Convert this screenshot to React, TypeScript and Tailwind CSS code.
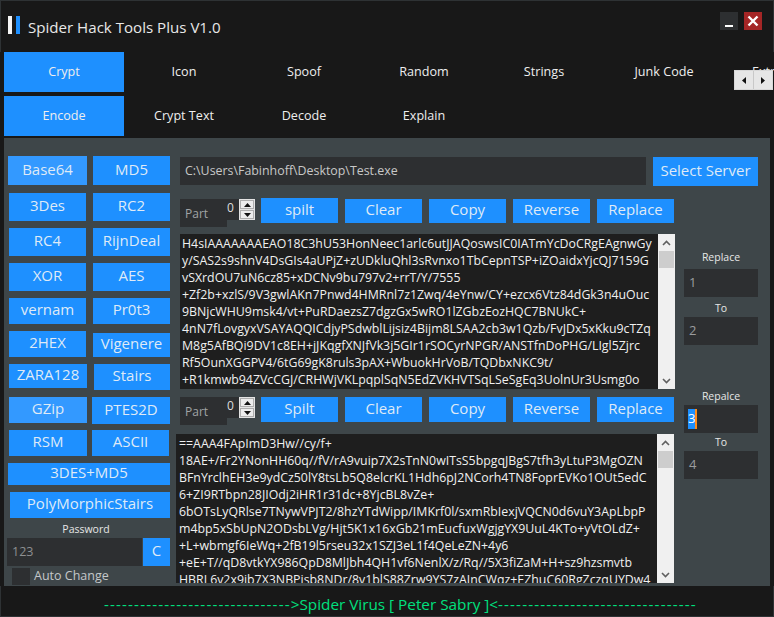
import React from "react";

const font = { fontFamily: '"Open Sans","Noto Sans",sans-serif' };

const text1 = [
  "H4sIAAAAAAAEAO18C3hU53HonNeec1arlc6utJJAQoswsIC0IATmYcDoCRgEAgnwGy",
  "y/SAS2s9shnV4DsGIs4aUPjZ+zUDkluQhl3sRvnxo1TbCepnTSP+iZOaidxYjcQJ7159G",
  "vSXrdOU7uN6cz85+xDCNv9bu797v2+rrT/Y/7555",
  "+Zf2b+xzlS/9V3gwlAKn7Pnwd4HMRnl7z1Zwq/4eYnw/CY+ezcx6Vtz84dGk3n4uOuc",
  "9BNjcWHU9msk4/vt+PuRDaezsZ7dgzGx5wRO1lZGbzEozHQC7BNUkC+",
  "4nN7fLovgyxVSAYAQQICdjyPSdwblLijsiz4Bijm8LSAA2cb3w1Qzb/FvJDx5xKku9cTZq",
  "M8g5AfBQi9DV1c8EH+jJKqgfXNJfVk3j5GIr1rSOCyrNPGR/ANSTfnDoPHG/LIgl5Zjrc",
  "Rf5OunXGGPV4/6tG69gK8ruls3pAX+WbuokHrVoB/TQDbxNKC9t/",
  "+R1kmwb94ZVcCGJ/CRHWjVKLpqplSqN5EdZVKHVTSqLSeSgEq3UolnUr3Usmg0o",
];

const text2 = [
  "==AAA4FApImD3Hw//cy/f+",
  "18AE+/Fr2YNonHH60q//fV/rA9vuip7X2sTnN0wITsS5bpgqJBgS7tfh3yLtuP3MgOZN",
  "BFnYrclhEH3e9ydCz50lY8tsLb5Q8elcrKL1Hdh6pJ2NCorh4TN8FoprEVKo1OUt5edC",
  "6+ZI9RTbpn28JIOdj2iHR1r31dc+8YjcBL8vZe+",
  "6bOTsLyQRlse7TNywVPJT2/8hzYTdWipp/IMKrf0l/sxmRbIexjVQCN0d6vuY3ApLbpP",
  "m4bp5xSbUpN2ODsbLVg/Hjt5K1x16xGb21mEucfuxWgjgYX9UuL4KTo+yVtOLdZ+",
  "+L+wbmgf6IeWq+2fB19l5rseu32x1SZJ3eL1f4QeLeZN+4y6",
  "+eE+T//qD8vtkYX986QpD8MlJbh4QH1vf6NenlX/z/Rq//5X3fiZaM+H+sz9hzsmvtb",
  "HBRL6v2x9ib7X3NBPisb8NDr/8v1blS88Zrw9YS7zAJnCWqz+EZhuC60RgZczqUYDw4",
];

function Btn({ className = "", light, children }: { className?: string; light?: boolean; children: React.ReactNode }) {
  return (
    <div className={"flex shrink-0 items-center justify-center pb-[3px] text-[15px] leading-none text-[#dfeaf7] whitespace-nowrap " + (light ? "bg-[#3399ff] " : "bg-[#1e90ff] ") + className}>
      {children}
    </div>
  );
}

function Tab({ active, className = "", children }: { active?: boolean; className?: string; children: React.ReactNode }) {
  return (
    <div className={"flex h-[40px] w-[120px] shrink-0 items-center justify-center text-[12.6px] text-[#eeeeee] whitespace-nowrap " + (active ? "bg-[#1e90ff] " : "") + className}>
      {children}
    </div>
  );
}

function Lines({ lines }: { lines: string[] }) {
  return (
    <div className="min-w-0 flex-1 overflow-hidden pl-[2px] text-[12.35px] leading-[17px] text-[#f0f0f0]">
      {lines.map((l, i) => (
        <div key={i} className="h-[17px] whitespace-nowrap">
          {l}
        </div>
      ))}
    </div>
  );
}

function ScrollBar() {
  return (
    <div className="flex h-full w-[17px] shrink-0 flex-col items-center justify-between bg-[#f0f0f0]">
      <div className="flex w-full flex-col items-center">
        <div className="flex h-[17px] w-full items-center justify-center">
          <svg width="9" height="6" viewBox="0 0 9 6">
            <path d="M1 5 L4.5 1.5 L8 5" fill="none" stroke="#606060" strokeWidth="1.6" />
          </svg>
        </div>
        <div className="h-[17px] w-[15px] bg-[#cdcdcd]" />
      </div>
      <div className="flex h-[17px] w-full items-center justify-center">
        <svg width="9" height="6" viewBox="0 0 9 6">
          <path d="M1 1 L4.5 4.5 L8 1" fill="none" stroke="#606060" strokeWidth="1.6" />
        </svg>
      </div>
    </div>
  );
}

function Spinner() {
  return (
    <div className="flex h-[21px] w-[16px] shrink-0 flex-col border border-[#e3e3e3] bg-[#e3e3e3]">
      <div className="flex h-[9px] items-center justify-center border border-[#adadad] bg-[#ececec]">
        <svg width="7" height="4" viewBox="0 0 7 4"><path d="M3.5 0 L7 4 L0 4 Z" fill="#111" /></svg>
      </div>
      <div className="mt-px flex h-[9px] items-center justify-center border border-[#adadad] bg-[#ececec]">
        <svg width="7" height="4" viewBox="0 0 7 4"><path d="M0 0 L7 0 L3.5 4 Z" fill="#111" /></svg>
      </div>
    </div>
  );
}

function Toolbar({ split, first }: { split: string; first?: boolean }) {
  const h = first ? "ml-[7px] h-[24px] w-[77px]" : "ml-[7px] h-[25px] w-[77px]";
  return (
    <div className="ml-[4px] flex h-[28px] items-start">
      <div className="flex h-[28px] w-[47px] shrink-0 items-center bg-[#2d2f31] pl-[5px] pt-[2px] text-[12px] text-[#a0a4a6]">Part</div>
      <div className="h-[21px] w-[12px] shrink-0 bg-[#2d2f31] text-[12px] leading-[18px] text-[#dddddd]">0</div>
      <Spinner />
      <Btn className={first ? "ml-[6px] -mt-px h-[25px] w-[77px]" : "ml-[6px] h-[25px] w-[77px]"}>{split}</Btn>
      <Btn className={h}>Clear</Btn>
      <Btn className={h}>Copy</Btn>
      <Btn className={h}>Reverse</Btn>
      <Btn className={h}>Replace</Btn>
    </div>
  );
}

function FieldLabel({ children }: { children: React.ReactNode }) {
  return <div className="flex h-[18px] items-center justify-center pt-[2px] text-[10.5px] text-[#e6e6e6]">{children}</div>;
}

function Field({ children }: { children: React.ReactNode }) {
  return <div className="flex h-[28px] items-center bg-[#2d2f31] pl-[5px] text-[13px] text-[#9a9c9e]">{children}</div>;
}

export default function App() {
  return (
    <div style={font} className="flex h-[617px] w-[774px] flex-col overflow-hidden bg-[#181818]">
      {/* title bar */}
      <div className="flex h-[52px] shrink-0 items-start border-x border-t border-[#2e3234] pl-[7px]">
        <div className="mt-[15px] h-[18px] w-[4px] bg-[#f5f5f5]" />
        <div className="ml-[4px] mt-[15px] h-[18px] w-[4px] bg-[#1e90ff]" />
        <div className="ml-[8px] mt-[14px] text-[15.1px] leading-[24px] text-[#e8e8e8]">Spider Hack Tools Plus V1.0</div>
        <div className="ml-auto mr-[11px] mt-[11px] flex gap-[6px]">
          <div className="relative h-[18px] w-[18px] bg-[#2d2f31]">
            <div className="absolute bottom-[3px] left-[5px] h-[2px] w-[8px] bg-white" />
          </div>
          <div className="flex h-[18px] w-[18px] items-center justify-center bg-[#a52626]">
            <svg width="12" height="12" viewBox="0 0 12 12">
              <path d="M1.5 1.5 L10.5 10.5 M10.5 1.5 L1.5 10.5" stroke="#fff" strokeWidth="2.4" />
            </svg>
          </div>
        </div>
      </div>

      {/* tab rows */}
      <div className="relative flex h-[44px] shrink-0 pl-[4px]">
        <Tab active>Crypt</Tab>
        <Tab>Icon</Tab>
        <Tab>Spoof</Tab>
        <Tab>Random</Tab>
        <Tab>Strings</Tab>
        <Tab>Junk Code</Tab>
        <Tab className="justify-start pl-[28px]">Extra</Tab>
        <div className="absolute left-[734px] top-[18px] flex h-[20px] w-[39px] gap-px border border-[#d8d8d8] bg-[#c8c8c8]">
          <div className="flex flex-1 items-center justify-center bg-[#e6e6e6]">
            <svg width="4" height="7" viewBox="0 0 4 7"><path d="M4 0 L4 7 L0 3.5 Z" fill="#111" /></svg>
          </div>
          <div className="flex flex-1 items-center justify-center bg-[#e6e6e6]">
            <svg width="4" height="7" viewBox="0 0 4 7"><path d="M0 0 L0 7 L4 3.5 Z" fill="#111" /></svg>
          </div>
        </div>
      </div>
      <div className="flex h-[42px] shrink-0 pl-[4px]">
        <Tab active>Encode</Tab>
        <Tab>Crypt Text</Tab>
        <Tab>Decode</Tab>
        <Tab>Explain</Tab>
      </div>

      {/* panel */}
      <div className="mx-[4px] flex h-[448px] shrink-0 overflow-hidden bg-[#3e4649]">
        {/* algorithm column */}
        <div className="flex w-[172px] shrink-0 flex-col pt-[18px]">
          <div className="mb-[8px] flex h-[29px]">
            <Btn light className="ml-[4px] h-[29px] w-[79px]">Base64</Btn>
            <Btn className="ml-[6px] h-[29px] w-[77px]">MD5</Btn>
          </div>
          <div className="mb-[7px] flex h-[28px]">
            <Btn className="ml-[5px] h-[28px] w-[77px]">3Des</Btn>
            <Btn className="ml-[7px] h-[28px] w-[77px]">RC2</Btn>
          </div>
          <div className="mb-[7px] flex h-[28px]">
            <Btn className="ml-[5px] h-[28px] w-[77px]">RC4</Btn>
            <Btn className="ml-[7px] h-[28px] w-[77px]">RijnDeal</Btn>
          </div>
          <div className="mb-[7px] flex h-[28px]">
            <Btn className="ml-[5px] h-[28px] w-[77px]">XOR</Btn>
            <Btn className="ml-[7px] h-[28px] w-[77px]">AES</Btn>
          </div>
          <div className="mb-[7px] flex h-[26px]">
            <Btn className="ml-[5px] h-[26px] w-[77px]">vernam</Btn>
            <Btn className="ml-[7px] h-[26px] w-[77px]">Pr0t3</Btn>
          </div>
          <div className="mb-[7px] flex h-[26px]">
            <Btn className="ml-[5px] h-[26px] w-[77px]">2HEX</Btn>
            <Btn className="ml-[7px] mt-[2px] h-[24px] w-[77px]">Vigenere</Btn>
          </div>
          <div className="mb-[7px] flex h-[26px]">
            <Btn className="ml-[5px] h-[24px] w-[78px]">ZARA128</Btn>
            <Btn className="ml-[7px] h-[26px] w-[76px]">Stairs</Btn>
          </div>
          <div className="mb-[6px] flex h-[27px]">
            <Btn light className="ml-[5px] h-[26px] w-[78px]">GZip</Btn>
            <Btn className="ml-[5px] h-[27px] w-[78px]">PTES2D</Btn>
          </div>
          <div className="mb-[7px] flex h-[26px]">
            <Btn className="ml-[5px] h-[26px] w-[78px]">RSM</Btn>
            <Btn className="ml-[5px] h-[26px] w-[77px]">ASCII</Btn>
          </div>
          <div className="mb-[7px] flex h-[22px]">
            <Btn className="ml-[4px] h-[22px] w-[162px]">3DES+MD5</Btn>
          </div>
          <div className="flex h-[26px]">
            <Btn className="ml-[6px] h-[26px] w-[160px]">PolyMorphicStairs</Btn>
          </div>
          <div className="mt-[4px] flex h-[16px] w-[164px] items-center justify-center text-[10.5px] text-[#e6e6e6]">Password</div>
          <div className="flex h-[28px]">
            <div className="ml-[3px] flex h-[28px] w-[135px] items-center bg-[#2d2f31] pl-[5px] text-[12.5px] text-[#8e9092]">123</div>
            <Btn className="ml-[1px] h-[28px] w-[27px]">C</Btn>
          </div>
          <div className="mt-px flex h-[18px] items-center pl-[8px]">
            <div className="h-[17px] w-[18px] bg-[#2d2f31]" />
            <div className="ml-[4px] text-[12.5px] text-[#c4c8ca]">Auto Change</div>
          </div>
        </div>

        {/* main column */}
        <div className="flex w-[500px] shrink-0 flex-col pt-[19px]">
          <div className="ml-[4px] flex h-[29px] items-start">
            <div className="flex h-[28px] w-[466px] shrink-0 items-center bg-[#2d2f31] pl-[5px] pt-px text-[12.4px] text-[#c8c8c8]">C:\Users\Fabinhoff\Desktop\Test.exe</div>
            <Btn className="ml-[7px] h-[29px] w-[105px]">Select Server</Btn>
          </div>
          <div className="mt-[13px]">
            <Toolbar first split="spilt" />
          </div>
          <div className="ml-[4px] mt-[7px] flex h-[155px] w-[495px] overflow-hidden bg-[#1e1e1e] pt-px">
            <Lines lines={text1} />
            <div className="-mt-px h-[155px]">
              <ScrollBar />
            </div>
          </div>
          <div className="mt-[8px]">
            <Toolbar split="Spilt" />
          </div>
          <div className="mt-[9px] flex h-[149px] w-[498px] overflow-hidden bg-[#1e1e1e] pl-px pt-px">
            <Lines lines={text2} />
            <div className="-mt-px h-[149px]">
              <ScrollBar />
            </div>
          </div>
        </div>

        {/* replace column */}
        <div className="ml-[8px] flex w-[74px] shrink-0 flex-col pt-[110px]">
          <FieldLabel>Replace</FieldLabel>
          <div className="mt-[3px]"><Field>1</Field></div>
          <div className="mt-[2px]"><FieldLabel>To</FieldLabel></div>
          <Field>2</Field>
          <div className="mt-[42px]"><FieldLabel>Repalce</FieldLabel></div>
          <Field>
            <span className="-ml-px border-r-2 border-[#ff8c1a] bg-[#1e90ff] text-white">3</span>
          </Field>
          <FieldLabel>To</FieldLabel>
          <Field>4</Field>
        </div>
      </div>

      {/* footer */}
      <div className="flex flex-1 items-center border-x border-b border-[#2e3234] pl-[103px] pt-[7px] text-[15.3px] leading-none whitespace-nowrap text-[#00e07f]">
        <span className="tracking-[1.1px]">-------------------------------</span>
        <span>&gt;Spider Virus [ Peter Sabry ]&lt;</span>
        <span className="tracking-[1.1px]">---------------------------------</span>
      </div>
    </div>
  );
}
